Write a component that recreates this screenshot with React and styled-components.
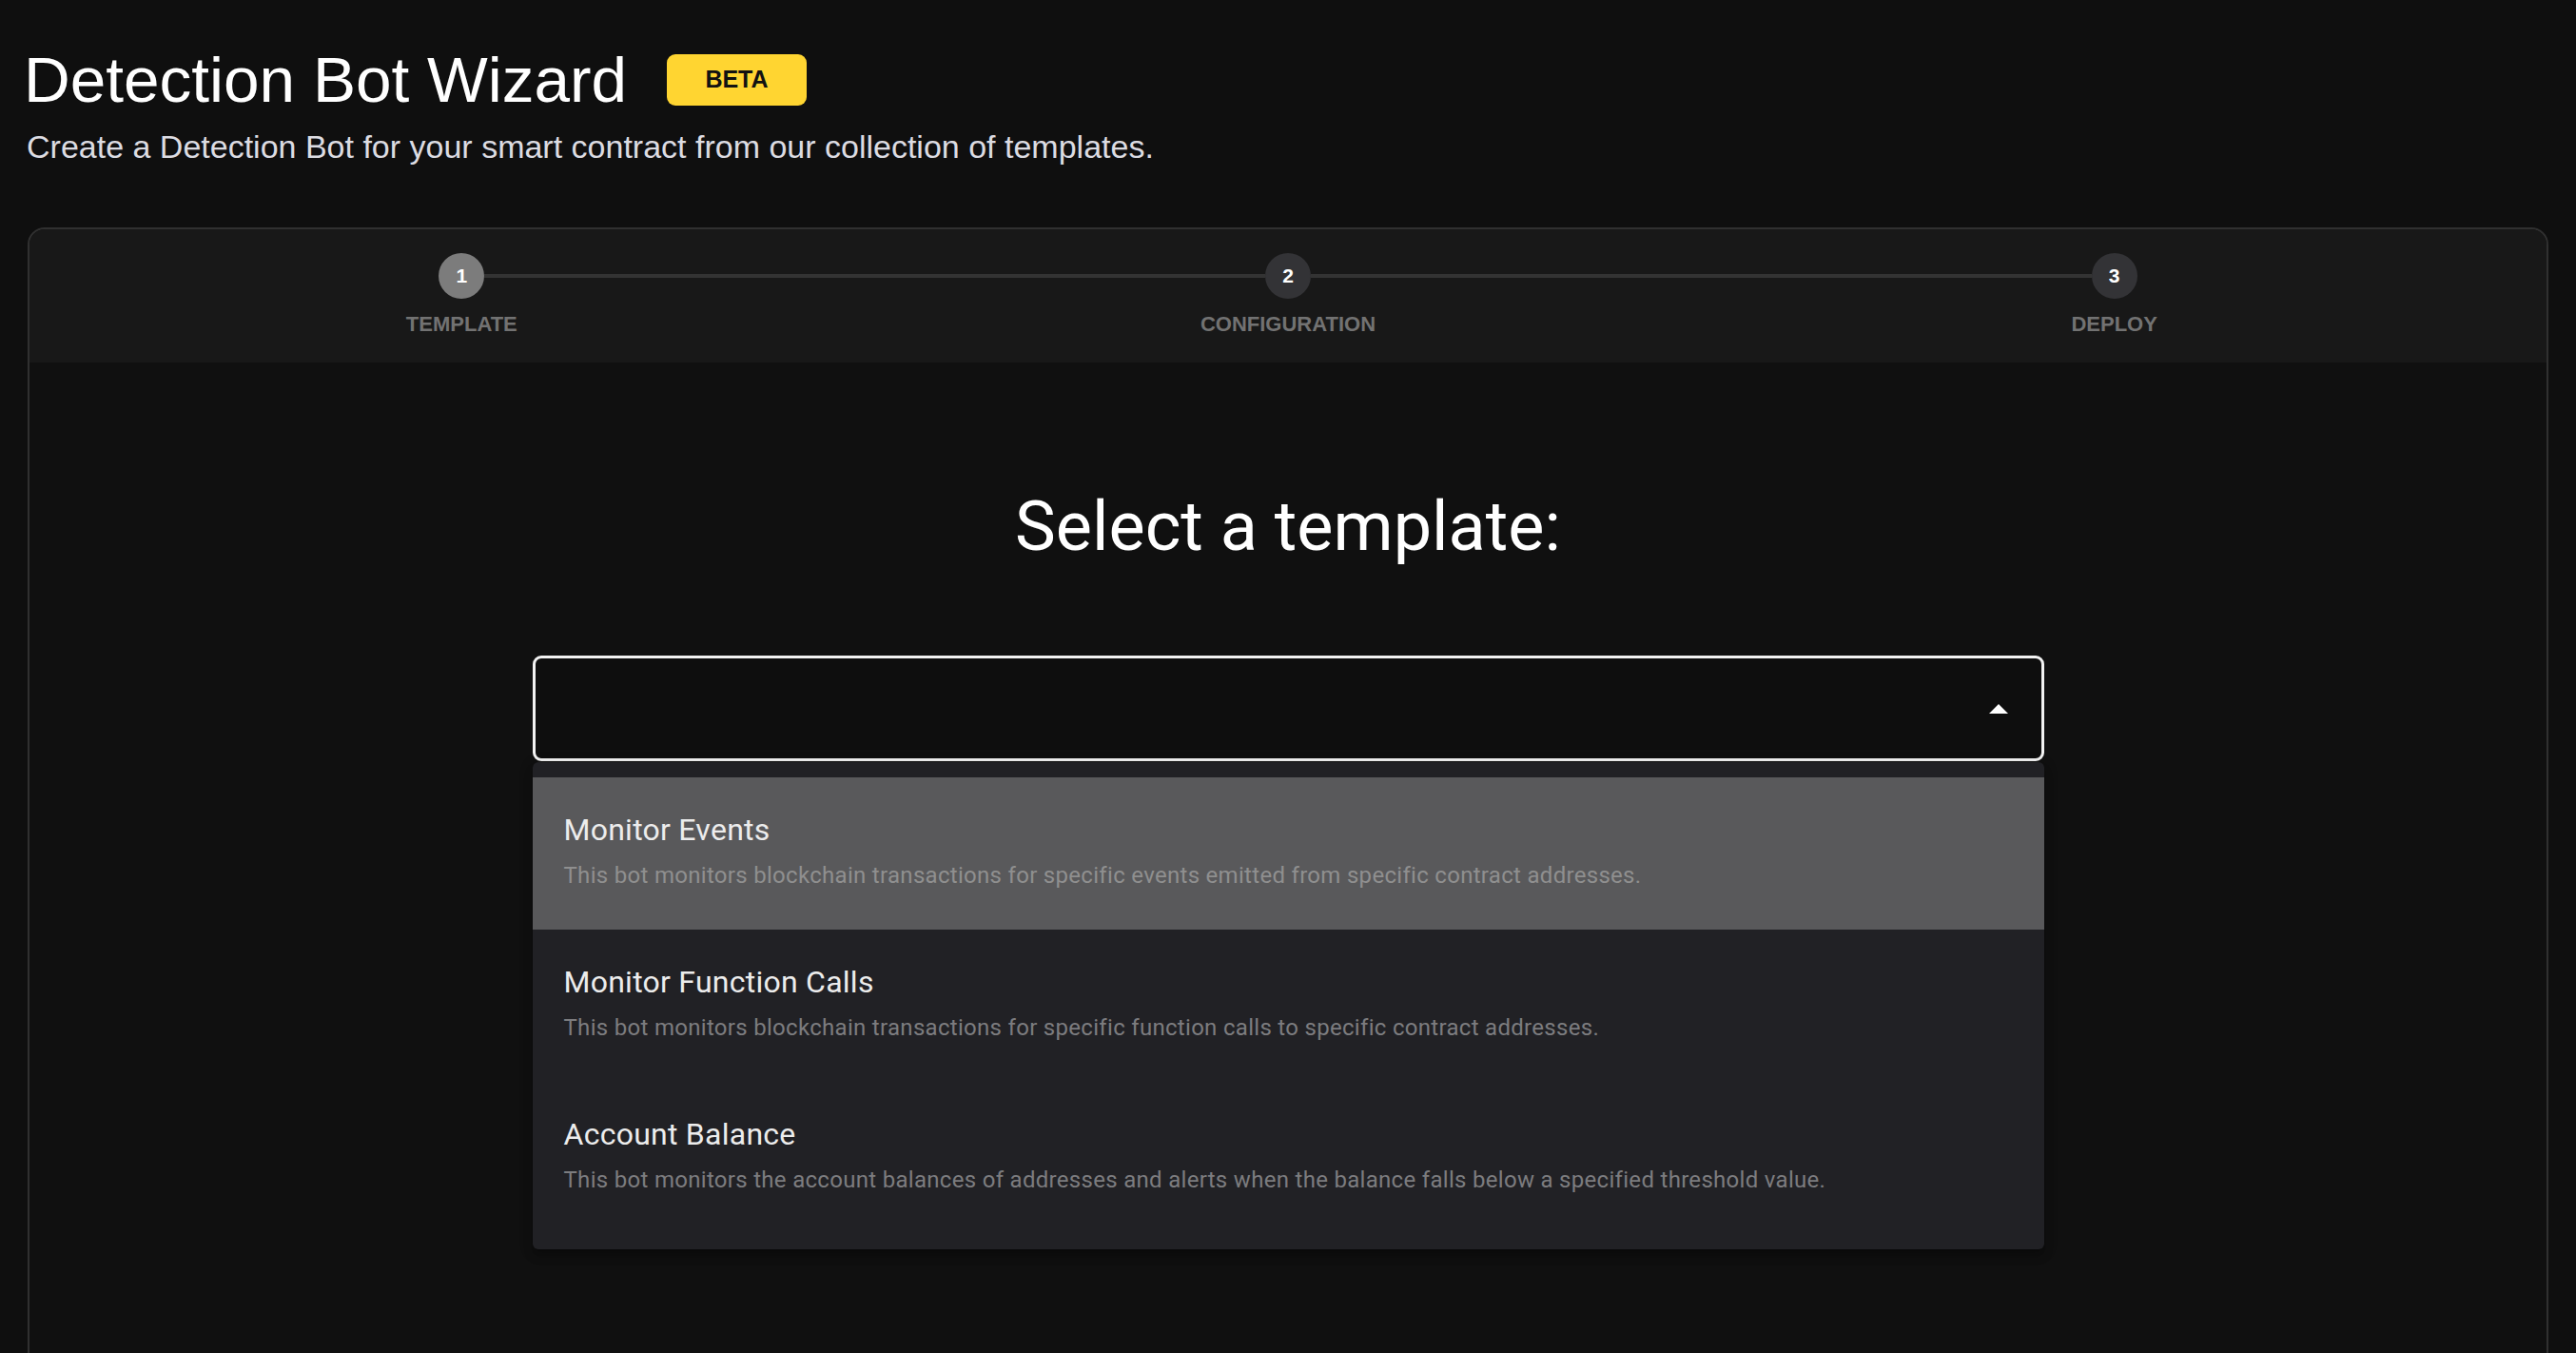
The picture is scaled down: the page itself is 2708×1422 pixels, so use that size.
import React from 'react';
import styled, { createGlobalStyle } from 'styled-components';

const GlobalStyle = createGlobalStyle`
  html, body {
    margin: 0;
    padding: 0;
    background: #0f0f0f;
  }
  * {
    box-sizing: border-box;
  }
`;

const steps = ['Template', 'Configuration', 'Deploy'];

const templates = [
  {
    title: 'Monitor Events',
    description:
      'This bot monitors blockchain transactions for specific events emitted from specific contract addresses.',
  },
  {
    title: 'Monitor Function Calls',
    description:
      'This bot monitors blockchain transactions for specific function calls to specific contract addresses.',
  },
  {
    title: 'Account Balance',
    description:
      'This bot monitors the account balances of addresses and alerts when the balance falls below a specified threshold value.',
  },
];

function App() {
  return (
    <>
      <GlobalStyle />
      <Page>
        <TitleRow>
          <Title>Detection Bot Wizard</Title>
          <Badge>BETA</Badge>
        </TitleRow>
        <Subtitle>
          Create a Detection Bot for your smart contract from our collection of templates.
        </Subtitle>

        <Card>
          <StepperBar>
            {steps.map((step, i) => (
              <Step key={step}>
                <StepTrack>
                  <Connector $hidden={i === 0} />
                  <StepCircle $active={i === 0}>{i + 1}</StepCircle>
                  <Connector $hidden={i === steps.length - 1} />
                </StepTrack>
                <StepLabel>{step}</StepLabel>
              </Step>
            ))}
          </StepperBar>

          <CardBody>
            <Heading>Select a template:</Heading>
            <SelectWrap>
              <SelectBox>
                <Arrow viewBox="0 0 20 10" width="20" height="10">
                  <path d="M0 10 L10 0 L20 10 Z" fill="#ffffff" />
                </Arrow>
              </SelectBox>
              <Menu>
                {templates.map((t, i) => (
                  <MenuItem key={t.title} $highlighted={i === 0}>
                    <ItemTitle>{t.title}</ItemTitle>
                    <ItemDescription $highlighted={i === 0}>{t.description}</ItemDescription>
                  </MenuItem>
                ))}
              </Menu>
            </SelectWrap>
          </CardBody>
        </Card>
      </Page>
    </>
  );
}

export default App;

const Page = styled.div`
  height: 100vh;
  overflow: hidden;
  padding: 50px 29px 0;
  background: #0f0f0f;
  font-family: "Liberation Sans", Arial, sans-serif;
  display: flex;
  flex-direction: column;
`;

const TitleRow = styled.div`
  display: flex;
  align-items: center;
  gap: 42px;
`;

const Title = styled.h1`
  margin: 0 0 0 -4px;
  font-size: 67.5px;
  line-height: 67px;
  font-weight: 400;
  color: #ffffff;
`;

const Badge = styled.span`
  display: flex;
  align-items: center;
  justify-content: center;
  width: 147px;
  height: 54px;
  border-radius: 9px;
  background: #ffd531;
  color: #121212;
  font-size: 25px;
  font-weight: 700;
`;

const Subtitle = styled.p`
  margin: 20px 0 0 -1px;
  font-size: 34px;
  line-height: 34px;
  color: #dcdce2;
`;

const Card = styled.div`
  margin-top: 68px;
  flex: 0 0 auto;
  min-height: 1300px;
  border: 2px solid #303030;
  border-radius: 18px;
  overflow: hidden;
  background: #101010;
  display: flex;
  flex-direction: column;
`;

const StepperBar = styled.div`
  display: grid;
  grid-template-columns: repeat(3, 1fr);
  padding: 25px 20px 28px;
  background: #181818;
`;

const Step = styled.div`
  display: flex;
  flex-direction: column;
  align-items: center;
`;

const StepTrack = styled.div`
  display: flex;
  align-items: center;
  width: 100%;
`;

const Connector = styled.div`
  flex: 1;
  height: 4px;
  background: ${(p) => (p.$hidden ? 'transparent' : '#333333')};
`;

const StepCircle = styled.div`
  width: 48px;
  height: 48px;
  border-radius: 50%;
  display: flex;
  align-items: center;
  justify-content: center;
  background: ${(p) => (p.$active ? '#7c7c7c' : '#333336')};
  color: #ffffff;
  font-size: 21px;
  font-weight: 700;
`;

const StepLabel = styled.div`
  margin-top: 15px;
  font-size: 22px;
  line-height: 24px;
  font-weight: 700;
  text-transform: uppercase;
  color: #727272;
`;

const CardBody = styled.div`
  flex: 1;
  display: flex;
  flex-direction: column;
  align-items: center;
  padding-top: 137px;
`;

const Heading = styled.h2`
  margin: 0;
  font-family: Roboto, "Liberation Sans", sans-serif;
  font-size: 72px;
  line-height: 72px;
  font-weight: 400;
  color: #ffffff;
`;

const SelectWrap = styled.div`
  position: relative;
  margin-top: 99px;
  width: 1589px;
`;

const SelectBox = styled.div`
  height: 111px;
  border: 3px solid #f2f2f2;
  border-radius: 9px;
  background: #0e0e0e;
  display: flex;
  align-items: center;
  justify-content: flex-end;
  padding-right: 35px;
`;

const Arrow = styled.svg`
  display: block;
`;

const Menu = styled.div`
  position: absolute;
  top: 112px;
  left: 0;
  right: 0;
  padding: 16px 0;
  background: #212125;
  border-radius: 6px;
  box-shadow: 0 5px 5px -3px rgba(0, 0, 0, 0.2), 0 8px 10px 1px rgba(0, 0, 0, 0.14),
    0 3px 14px 2px rgba(0, 0, 0, 0.12);
  font-family: Roboto, "Liberation Sans", sans-serif;
`;

const MenuItem = styled.div`
  height: 160px;
  padding: 35px 33px 0;
  background: ${(p) => (p.$highlighted ? '#59595b' : 'transparent')};
`;

const ItemTitle = styled.div`
  font-size: 32px;
  line-height: 40px;
  letter-spacing: 0.25px;
  color: #ececec;
`;

const ItemDescription = styled.div`
  margin-top: 14px;
  font-size: 24px;
  line-height: 28px;
  letter-spacing: 0.3px;
  color: ${(p) => (p.$highlighted ? '#8f8f8f' : '#7c7c7f')};
`;
